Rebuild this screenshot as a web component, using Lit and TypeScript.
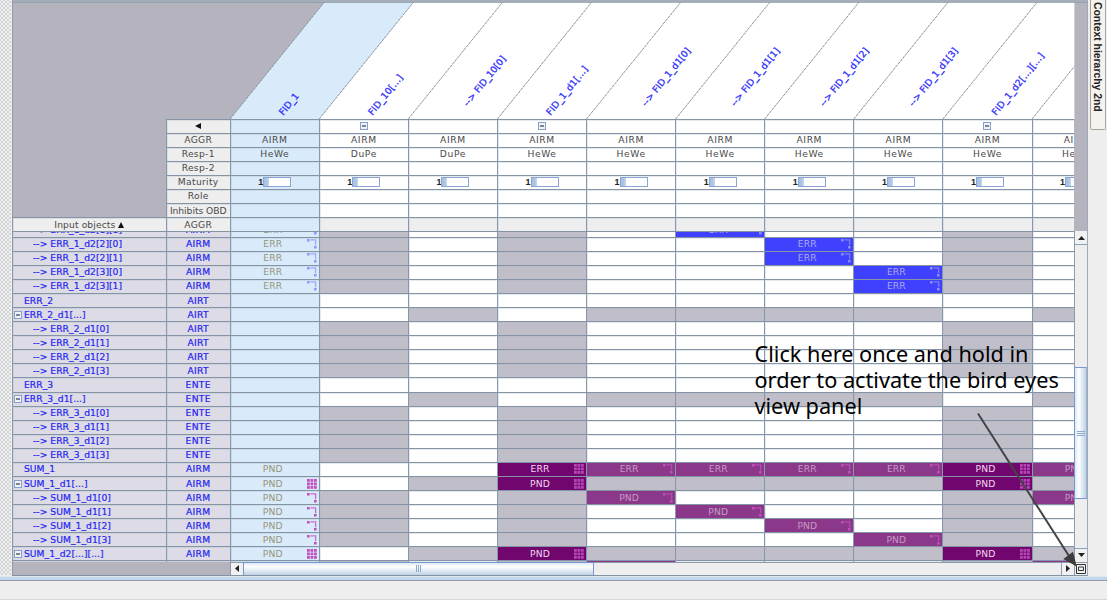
import { LitElement, html, svg, css, nothing } from "lit";
import { customElement } from "lit/decorators.js";

type Mark = "grid" | "link" | "";
type Kind = "plain" | "array" | "item";
interface Col { name: string; kind: Kind; resp: string }
interface Row { name: string; kind: Kind; aggr: string; first?: string; mark?: Mark; cells?: Record<number, string> }

const PITCH = 89.1;
const cols: Col[] = [
  { name: "FID_1", kind: "plain", resp: "HeWe" },
  { name: "FID_10[...]", kind: "array", resp: "DuPe" },
  { name: "--> FID_10[0]", kind: "item", resp: "DuPe" },
  { name: "FID_1_d1[...]", kind: "array", resp: "HeWe" },
  { name: "--> FID_1_d1[0]", kind: "item", resp: "HeWe" },
  { name: "--> FID_1_d1[1]", kind: "item", resp: "HeWe" },
  { name: "--> FID_1_d1[2]", kind: "item", resp: "HeWe" },
  { name: "--> FID_1_d1[3]", kind: "item", resp: "HeWe" },
  { name: "FID_1_d2[...][...]", kind: "array", resp: "HeWe" },
  { name: "", kind: "item", resp: "HeWe" },
];

const item = (name: string, aggr: string, first = "", mark: Mark = "", cells: Record<number, string> = {}): Row =>
  ({ name: "--> " + name, kind: "item", aggr, first, mark, cells });

const rows: Row[] = [
  item("ERR_1_d2[1][1]", "AIRM", "ERR", "link", { 5: "blue ERR link" }),
  item("ERR_1_d2[2][0]", "AIRM", "ERR", "link", { 6: "blue ERR link" }),
  item("ERR_1_d2[2][1]", "AIRM", "ERR", "link", { 6: "blue ERR link" }),
  item("ERR_1_d2[3][0]", "AIRM", "ERR", "link", { 7: "blue ERR link" }),
  item("ERR_1_d2[3][1]", "AIRM", "ERR", "link", { 7: "blue ERR link" }),
  { name: "ERR_2", kind: "plain", aggr: "AIRT" },
  { name: "ERR_2_d1[...]", kind: "array", aggr: "AIRT" },
  ...[0, 1, 2, 3].map((i) => item(`ERR_2_d1[${i}]`, "AIRT")),
  { name: "ERR_3", kind: "plain", aggr: "ENTE" },
  { name: "ERR_3_d1[...]", kind: "array", aggr: "ENTE" },
  ...[0, 1, 2, 3].map((i) => item(`ERR_3_d1[${i}]`, "ENTE")),
  { name: "SUM_1", kind: "plain", aggr: "AIRM", first: "PND", cells: {
    3: "dark ERR grid", 4: "mauve ERR link", 5: "mauve ERR link", 6: "mauve ERR link", 7: "mauve ERR link", 8: "dark PND grid", 9: "mauve PND link" } },
  { name: "SUM_1_d1[...]", kind: "array", aggr: "AIRM", first: "PND", mark: "grid", cells: { 3: "dark PND grid", 8: "dark PND grid" } },
  item("SUM_1_d1[0]", "AIRM", "PND", "link", { 4: "mauve PND link", 9: "mauve PND link" }),
  item("SUM_1_d1[1]", "AIRM", "PND", "link", { 5: "mauve PND link" }),
  item("SUM_1_d1[2]", "AIRM", "PND", "link", { 6: "mauve PND link" }),
  item("SUM_1_d1[3]", "AIRM", "PND", "link", { 7: "mauve PND link" }),
  { name: "SUM_1_d2[...][...]", kind: "array", aggr: "AIRM", first: "PND", mark: "grid", cells: { 3: "dark PND grid", 8: "dark PND grid" } },
  { name: "", kind: "item", aggr: "", cells: { 4: "mauve", 9: "mauve" } },
];

const minus = html`<svg class="minus" width="8" height="8" viewBox="0 0 8 8"><rect x=".5" y=".5" width="7" height="7" fill="#eef3fa" stroke="#86a0cc"/><path d="M2 4h4" stroke="#333a48" stroke-width="1.2"/></svg>`;

const mark = (m?: Mark) => m === "grid"
  ? html`<svg class="mark" width="10" height="10" viewBox="0 0 10 10">${[0, 3.5, 7].map((x) => [0, 3.5, 7].map((y) => svg`<rect x=${x} y=${y} width="2.8" height="2.8" fill="currentColor"/>`))}</svg>`
  : m === "link"
    ? html`<svg class="mark" width="10" height="10" viewBox="0 0 10 10"><path d="M0 0h2.6v2.6H0zM7 7h2.6v2.6H7z" fill="currentColor"/><path d="M3.4 .9h5.2v5.3" fill="none" stroke="currentColor" stroke-width="1.3" opacity=".8"/></svg>`
    : nothing;

@customElement("app-root")
export class AppRoot extends LitElement {
  static styles = css`
    :host { display: block; position: relative; width: 1107px; height: 600px; overflow: hidden; background: #eee;
      font: 9.2px/12px "DejaVu Sans", Verdana, sans-serif; color: #4a4a4a; }
    * { box-sizing: border-box; }
    .work { display: flex; height: 576px; }
    .grip { width: 12px; height: 575px; flex: none; border-right: 1px solid #eee; background-color: #f0f0f0;
      background-image: radial-gradient(#c6c9cc .6px, transparent 1px), radial-gradient(#c6c9cc .6px, transparent 1px);
      background-size: 4px 4px; background-position: 0 0, 2px 2px; }
    .panel { width: 1076px; flex: none; display: grid; grid-template-columns: 1061.4px 12.6px; grid-template-rows: 118.5px 112.7px 330.8px 13px;
      background: #b4b3be; border-left: 1px solid #8e99a5; border-right: 1px solid #9babb9; border-bottom: 1px solid #8292a4; }
    .diag { grid-column: 1 / 3; overflow: hidden; border-top: 2px solid #a5adb8; }
    .diag svg { display: block; }
    .diag text { fill: #2c2cfa; font-size: 9.2px; stroke: #2c2cfa; stroke-width: .3px; }
    .diag .array { letter-spacing: .2px; }
    .heads, .body { grid-column: 1; overflow: hidden; }
    .body { background: #fff; border-top: 1px solid #8494a5; }
    .rows { margin-top: -9.6px; }
    .row { display: flex; height: 14.08px; width: 1110px; }
    .cell { flex: none; width: 89.1px; height: 100%; border-left: 1px solid #8898a9; border-top: 1px solid #8494a5; background: #fff;
      display: flex; align-items: center; justify-content: center; letter-spacing: .6px; overflow: hidden; position: relative; white-space: nowrap;
      box-shadow: inset 1px 1px 0 rgba(170, 185, 200, .3); }
    .cell.grey { background: #c0bec8; }
    .cell.first { background: #d9eafa; }
    .cell.head { background: #eee; }
    .corner { width: 152.8px; flex: none; }
    .cell.label { width: 63.9px; background: #eee; letter-spacing: .3px; }
    .cell.label.tight { letter-spacing: -.04px; }
    .cell.name { width: 152.8px; border-left: 0; background: #dddbe6; justify-content: flex-start; color: #2525f2; padding-left: 11px;
      letter-spacing: .03px; -webkit-text-stroke: .2px #2525f2; }
    .cell.name.item { padding-left: 20px; }
    .cell.name.array { padding-left: 1px; gap: 2px; }
    .cell.title { width: 152.8px; border-left: 0; background: #eee; letter-spacing: .1px; gap: 3px; }
    .cell.aggr { width: 63.9px; background: #dddbe6; color: #2525f2; letter-spacing: .3px; -webkit-text-stroke: .2px #2525f2; }
    .minus { display: block; flex: none; }
    .value { margin-right: 4px; letter-spacing: .1px; }
    .mark { position: absolute; right: 2px; top: 1.5px; }
    .body .first .value { color: #96967a; }
    .m-err { color: #9696fa; } .m-pnd { color: #c24fc0; }
    .blue { background: #4040ff; color: #a9a9ee; box-shadow: none; }
    .blue .mark { color: #8c8cf4; }
    .dark { background: #70066e; color: #f0d8f0; box-shadow: none; }
    .dark .mark { color: #b545b3; }
    .mauve { background: #8c388a; color: #c39ac4; box-shadow: none; }
    .mauve .mark { color: #c050bc; }
    .mat { display: flex; align-items: center; font: bold 9px/11px "Liberation Sans", Arial, sans-serif; color: #222; letter-spacing: 0; }
    .gauge { width: 28px; height: 10px; border: 1px solid #8aa4d6; background: linear-gradient(90deg, #a9c2e0 0 2px, #c6d6ea 5px, #fff 5px); }
    .vbar { grid-column: 2; grid-row: 3; display: flex; flex-direction: column; border-left: 1px solid #8a9bad; background: #eee; }
    .btn { flex: none; display: grid; place-items: center; background: #f1f1f1; }
    .up { height: 14px; border-bottom: 1px solid #8aa3bd; }
    .vtrack { height: 122px; }
    .vthumb { height: 132px; border: 1px solid #7896d2; border-right-color: #9eb4d4; background: linear-gradient(90deg, #dce8f5, #fff 35%, #bed2e6); display: grid; place-items: center; margin-left: -1px; }
    .vrest { flex: 1; border-bottom: 1px solid #8aa3bd; }
    .down { height: 13px; }
    .hrow { grid-column: 1 / 3; grid-row: 4; display: flex; padding-left: 217px; }
    .hbar { flex: 1; display: flex; background: #eee; border-top: 1px solid #8a9bad; border-left: 1px solid #8a9bad; }
    .left { width: 12px; }
    .hthumb { width: 351px; border: 1px solid #7896d2; border-bottom: 0; margin-top: -1px; background: linear-gradient(#dce8f5, #fff 30%, #bed2e6); display: grid; place-items: center; }
    .hrest { flex: 1; }
    .right { width: 13px; border-left: 1px solid #8aa3bd; }
    .eye { width: 13px; border-left: 1px solid #8a9bad; }
    .side { flex: 1; padding-left: 2px; }
    .tab { width: 16px; height: 130px; border: 1px solid #aaa49f; border-top: 0; border-radius: 0 0 2px 2px; background: #f6f2ee; writing-mode: vertical-rl;
      font: bold 10.4px/14px "Liberation Sans", Arial, sans-serif; color: #222; padding: 2px 1px 0 0; white-space: nowrap; }
    .status { height: 24px; border-top: 1px solid #dfe6ec; border-bottom: 1px solid #d6d6d6; }
    .status::before { content: ""; display: block; height: 3px; background: #c3d7eb; border-bottom: 1px solid #8f9dab; }
    .note { position: absolute; left: 754.5px; top: 341px; font: 21.7px/26px "Noto Sans", "Open Sans", sans-serif; color: #000; white-space: pre; }
    .arrow { position: absolute; left: 0; top: 0; }
  `;

  private diag() {
    return html`<div class="diag"><svg width="1074" height="117" viewBox="13 2 1074 117">
      <path d="M230.3 119L324.7 2H1074.4V119z" fill="#fff"/>
      <path d="M230.3 119L324.7 2H413.8L319.4 119z" fill="#d9eafa"/>
      <svg x="13" y="2" width="1061.4" height="117" viewBox="13 2 1061.4 117">
      ${cols.map((c, i) => {
        const x = 230.1 + PITCH * i;
        const it = c.kind === "item";
        return svg`<path d="M${x} 119l94.4-117" stroke="#8693a2" stroke-width="1" stroke-dasharray="3 .7"/>
        <text class=${c.kind} transform="translate(${x + (it ? 59.3 : 53.2)} ${it ? 107 : 116}) rotate(-51.1)">${c.name}</text>`;
      })}</svg>
      <path d="M13 2.3H1087" stroke="#8e9dab"/>
    </svg></div>`;
  }

  private head(label: string, cell: (c: Col) => unknown) {
    return html`<div class="row"><div class="corner"></div>
      <div class="cell label ${label === "Inhibits OBD" ? "tight" : ""}">${label === "<" ? html`<svg width="6" height="6"><path d="M6 0v6L0 3z" fill="#111"/></svg>` : label}</div>
      ${cols.map((c, i) => html`<div class="cell ${i ? "" : "first"}">${cell(c)}</div>`)}</div>`;
  }

  private bodyRow(r: Row) {
    const tint = r.first === "ERR" ? "m-err" : "m-pnd";
    return html`<div class="row"><div class="cell name ${r.kind}">${r.kind === "array" ? minus : nothing}<span>${r.name}</span></div>
      <div class="cell aggr">${r.aggr}</div>
      ${cols.map((c, i) => {
        if (i === 0) return html`<div class="cell first ${tint}"><span class="value">${r.first ?? ""}</span>${mark(r.mark)}</div>`;
        const v = r.cells?.[i];
        if (v) {
          const [tone, text, m] = v.split(" ");
          return html`<div class="cell ${tone}"><span class="value">${text ?? ""}</span>${mark(m as Mark)}</div>`;
        }
        const grey = (r.kind === "item" && c.kind === "array") || (r.kind === "array" && c.kind === "item");
        return html`<div class="cell ${grey ? "grey" : ""}"></div>`;
      })}</div>`;
  }

  render() {
    const blank = () => nothing;
    return html`<div class="work">
      <div class="grip"></div>
      <div class="panel">
        ${this.diag()}
        <div class="heads">
          ${this.head("<", (c) => (c.kind === "array" ? minus : nothing))}
          ${this.head("AGGR", () => "AIRM")}
          ${this.head("Resp-1", (c) => c.resp)}
          ${this.head("Resp-2", blank)}
          ${this.head("Maturity", () => html`<span class="mat">1<span class="gauge"></span></span>`)}
          ${this.head("Role", blank)}
          ${this.head("Inhibits OBD", blank)}
          <div class="row"><div class="cell title">Input objects<svg width="6" height="6"><path d="M0 6h6L3 0z" fill="#111"/></svg></div>
            <div class="cell label">AGGR</div>
            ${cols.map((_, i) => html`<div class="cell ${i ? "head" : "first"}"></div>`)}</div>
        </div>
        <div class="body"><div class="rows">${rows.map((r) => this.bodyRow(r))}</div></div>
        <div class="vbar">
          <div class="btn up"><svg width="7" height="4"><path d="M0 4h7L3.5 0z" fill="#222"/></svg></div>
          <div class="vtrack"></div>
          <div class="vthumb"><svg width="8" height="5"><path d="M0 .5h8M0 2.5h8M0 4.5h8" stroke="#8ea8d4"/></svg></div>
          <div class="vrest"></div>
          <div class="btn down"><svg width="7" height="4"><path d="M0 0h7L3.5 4z" fill="#222"/></svg></div>
        </div>
        <div class="hrow"><div class="hbar">
          <div class="btn left"><svg width="4" height="7"><path d="M4 0v7L0 3.5z" fill="#222"/></svg></div>
          <div class="hthumb"><svg width="5" height="7"><path d="M.5 0v7M2.5 0v7M4.5 0v7" stroke="#8ea8d4"/></svg></div>
          <div class="hrest"></div>
          <div class="btn right"><svg width="4" height="7"><path d="M0 0v7L4 3.5z" fill="#222"/></svg></div>
          <div class="btn eye"><svg width="10" height="10"><path d="M.5.5h9v9h-9zM2.5 3h5v3.5h-5z" fill="none" stroke="#333"/></svg></div>
        </div></div>
      </div>
      <div class="side"><div class="tab">Context hierarchy 2nd</div></div>
    </div>
    <div class="status"></div>
    <div class="note">Click here once and hold in
order to activate the bird eyes
view panel</div>
    <svg class="arrow" width="1107" height="600"><path d="M978 413.5L1069 556" stroke="#444" stroke-width="2"/><path d="M1076.7 566.5L1063.3 559L1073 551.7z" fill="#3c3c3c"/></svg>`;
  }
}
